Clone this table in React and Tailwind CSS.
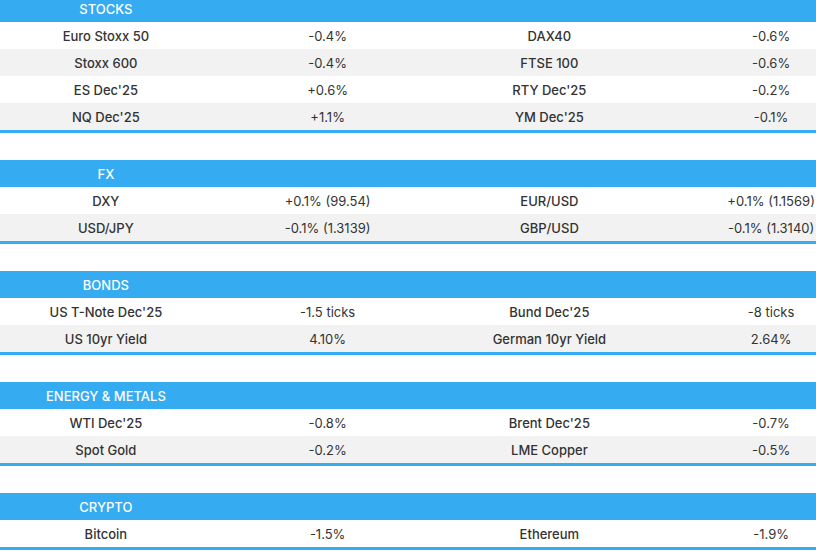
const SECTIONS = [
  {
    title: "STOCKS",
    rows: [
      ["Euro Stoxx 50", "-0.4%", "DAX40", "-0.6%"],
      ["Stoxx 600", "-0.4%", "FTSE 100", "-0.6%"],
      ["ES Dec'25", "+0.6%", "RTY Dec'25", "-0.2%"],
      ["NQ Dec'25", "+1.1%", "YM Dec'25", "-0.1%"],
    ],
  },
  {
    title: "FX",
    rows: [
      ["DXY", "+0.1% (99.54)", "EUR/USD", "+0.1% (1.1569)"],
      ["USD/JPY", "-0.1% (1.3139)", "GBP/USD", "-0.1% (1.3140)"],
    ],
  },
  {
    title: "BONDS",
    rows: [
      ["US T-Note Dec'25", "-1.5 ticks", "Bund Dec'25", "-8 ticks"],
      ["US 10yr Yield", "4.10%", "German 10yr Yield", "2.64%"],
    ],
  },
  {
    title: "ENERGY & METALS",
    rows: [
      ["WTI Dec'25", "-0.8%", "Brent Dec'25", "-0.7%"],
      ["Spot Gold", "-0.2%", "LME Copper", "-0.5%"],
    ],
  },
  {
    title: "CRYPTO",
    rows: [["Bitcoin", "-1.5%", "Ethereum", "-1.9%"]],
  },
];

function Section({ title, rows }) {
  return (
    <div className="border-b-[3px] border-[#35abf1] mb-[27px]">
      <div className="grid grid-cols-4 h-[27px] pt-[2px] items-center bg-[#35abf1] text-white font-medium">
        <div className="text-center">{title}</div>
      </div>
      {rows.map((r, i) => (
        <div
          key={i}
          className={`grid grid-cols-4 h-[27px] pt-[2px] items-center text-[#333333] ${
            i % 2 ? "bg-[#f2f2f2]" : "bg-white"
          }`}
        >
          <div className="text-center font-medium">{r[0]}</div>
          <div className="text-center">{r[1]}</div>
          <div className="text-center font-medium">{r[2]}</div>
          <div className="text-center whitespace-nowrap">{r[3]}</div>
        </div>
      ))}
    </div>
  );
}

export default function App() {
  return (
    <div className="w-[816px] h-[552px] overflow-hidden bg-white">
      <div
        className="w-[887px] ml-[-5px] mt-[-5px] text-[13px] leading-none"
        style={{ fontFamily: "Inter, 'Noto Sans', sans-serif" }}
      >
        {SECTIONS.map((s) => (
          <Section key={s.title} {...s} />
        ))}
      </div>
    </div>
  );
}
